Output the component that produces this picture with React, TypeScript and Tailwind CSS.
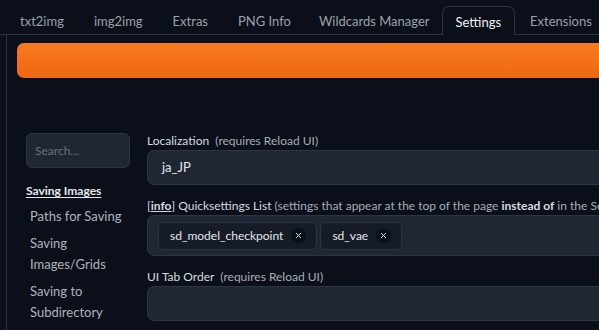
import { X } from "lucide-react";

const tabs = ["txt2img", "img2img", "Extras", "PNG Info", "Wildcards Manager", "Settings", "Extensions"];

function Chip({ label }: { label: string }) {
  return (
    <div className="flex items-center gap-[8px] h-[28px] pl-[11px] pr-[10px] rounded-[6px] border border-[#2b3544] bg-[#151c27] text-[12px] text-[#e5e7eb]">
      <span>{label}</span>
      <span className="flex items-center justify-center w-[15px] h-[15px] rounded-full bg-[#0b0f19]">
        <X size={9} strokeWidth={2.5} className="text-[#e5e7eb]" />
      </span>
    </div>
  );
}

function Label({ children }: { children: React.ReactNode }) {
  return <div className="text-[12px] leading-[16px] text-[#d7dbe0] mb-[1px] whitespace-nowrap">{children}</div>;
}

export default function App() {
  return (
    <div className="w-[599px] h-[330px] overflow-hidden bg-[#0b0f19] font-['Lato',sans-serif]">
      <div className="flex h-[35px] pl-[5px] border-b border-[#2a3340]">
        {tabs.map((t) =>
          t === "Settings" ? (
            <div
              key={t}
              className="mt-[6px] -mb-px px-[13px] pt-[7px] h-[29px] leading-[16px] rounded-t-[7px] border border-b-0 border-[#2a3340] bg-[#0b0f19] text-[13px] text-[#f3f4f6]"
            >
              {t}
            </div>
          ) : (
            <div
              key={t}
              className={`${t === "Wildcards Manager" ? "pl-[13px] pr-[12px]" : "px-[15px]"} pt-[13px] leading-[16px] text-[13px] text-[#9aa1ab] whitespace-nowrap`}
            >
              {t}
            </div>
          )
        )}
      </div>
      <div className="ml-[6px] h-full border-l border-[#2a3340] pl-[10px] pt-[8px]">
        <div className="w-[620px] h-[35px] rounded-[7px] bg-gradient-to-b from-[#f97a1f] to-[#ec6812]" />
        <div className="flex mt-[55px]">
          <div className="w-[130px] pl-[9px] shrink-0">
            <div className="w-[104px] h-[35px] rounded-[6px] bg-[#1f2733] border border-[#2b3544] px-[8px] flex items-center text-[12px] text-[#6b7280]">
              Search...
            </div>
            <div className="mt-[15px] text-[12px] leading-[16px] font-bold text-[#e5e7eb] underline underline-offset-2">
              Saving Images
            </div>
            <div className="pl-[4px] text-[13px] leading-[21px] text-[#aeb4bc]">
              <div className="mt-[7px]">Paths for Saving</div>
              <div className="mt-[6px]">Saving<br />Images/Grids</div>
              <div className="mt-[6px]">Saving to<br />Subdirectory</div>
            </div>
          </div>
          <div className="flex-1">
            <Label>
              Localization <span className="text-[#a7adb6]">&nbsp;(requires Reload UI)</span>
            </Label>
            <div className="w-[480px] h-[35px] rounded-[7px] bg-[#1f2733] border border-[#2b3544] flex items-center pl-[14px] text-[13px] text-[#e5e7eb]">
              ja_JP
            </div>
            <div className="mt-[13px]">
              <Label>
                [<span className="underline font-bold">info</span>] Quicksettings List{" "}
                <span className="text-[#a7adb6]">
                  (settings that appear at the top of the page <b className="text-[#d7dbe0]">instead of</b> in the Settings tab)
                </span>
              </Label>
            </div>
            <div className="w-[480px] h-[41px] rounded-[7px] bg-[#1f2733] border border-[#2b3544] flex items-center gap-[3px] pl-[10px]">
              <Chip label="sd_model_checkpoint" />
              <Chip label="sd_vae" />
            </div>
            <div className="mt-[13px]">
              <Label>
                UI Tab Order <span className="text-[#a7adb6]">&nbsp;(requires Reload UI)</span>
              </Label>
            </div>
            <div className="w-[480px] h-[35px] rounded-[7px] bg-[#1f2733] border border-[#2b3544]" />
          </div>
        </div>
      </div>
    </div>
  );
}
